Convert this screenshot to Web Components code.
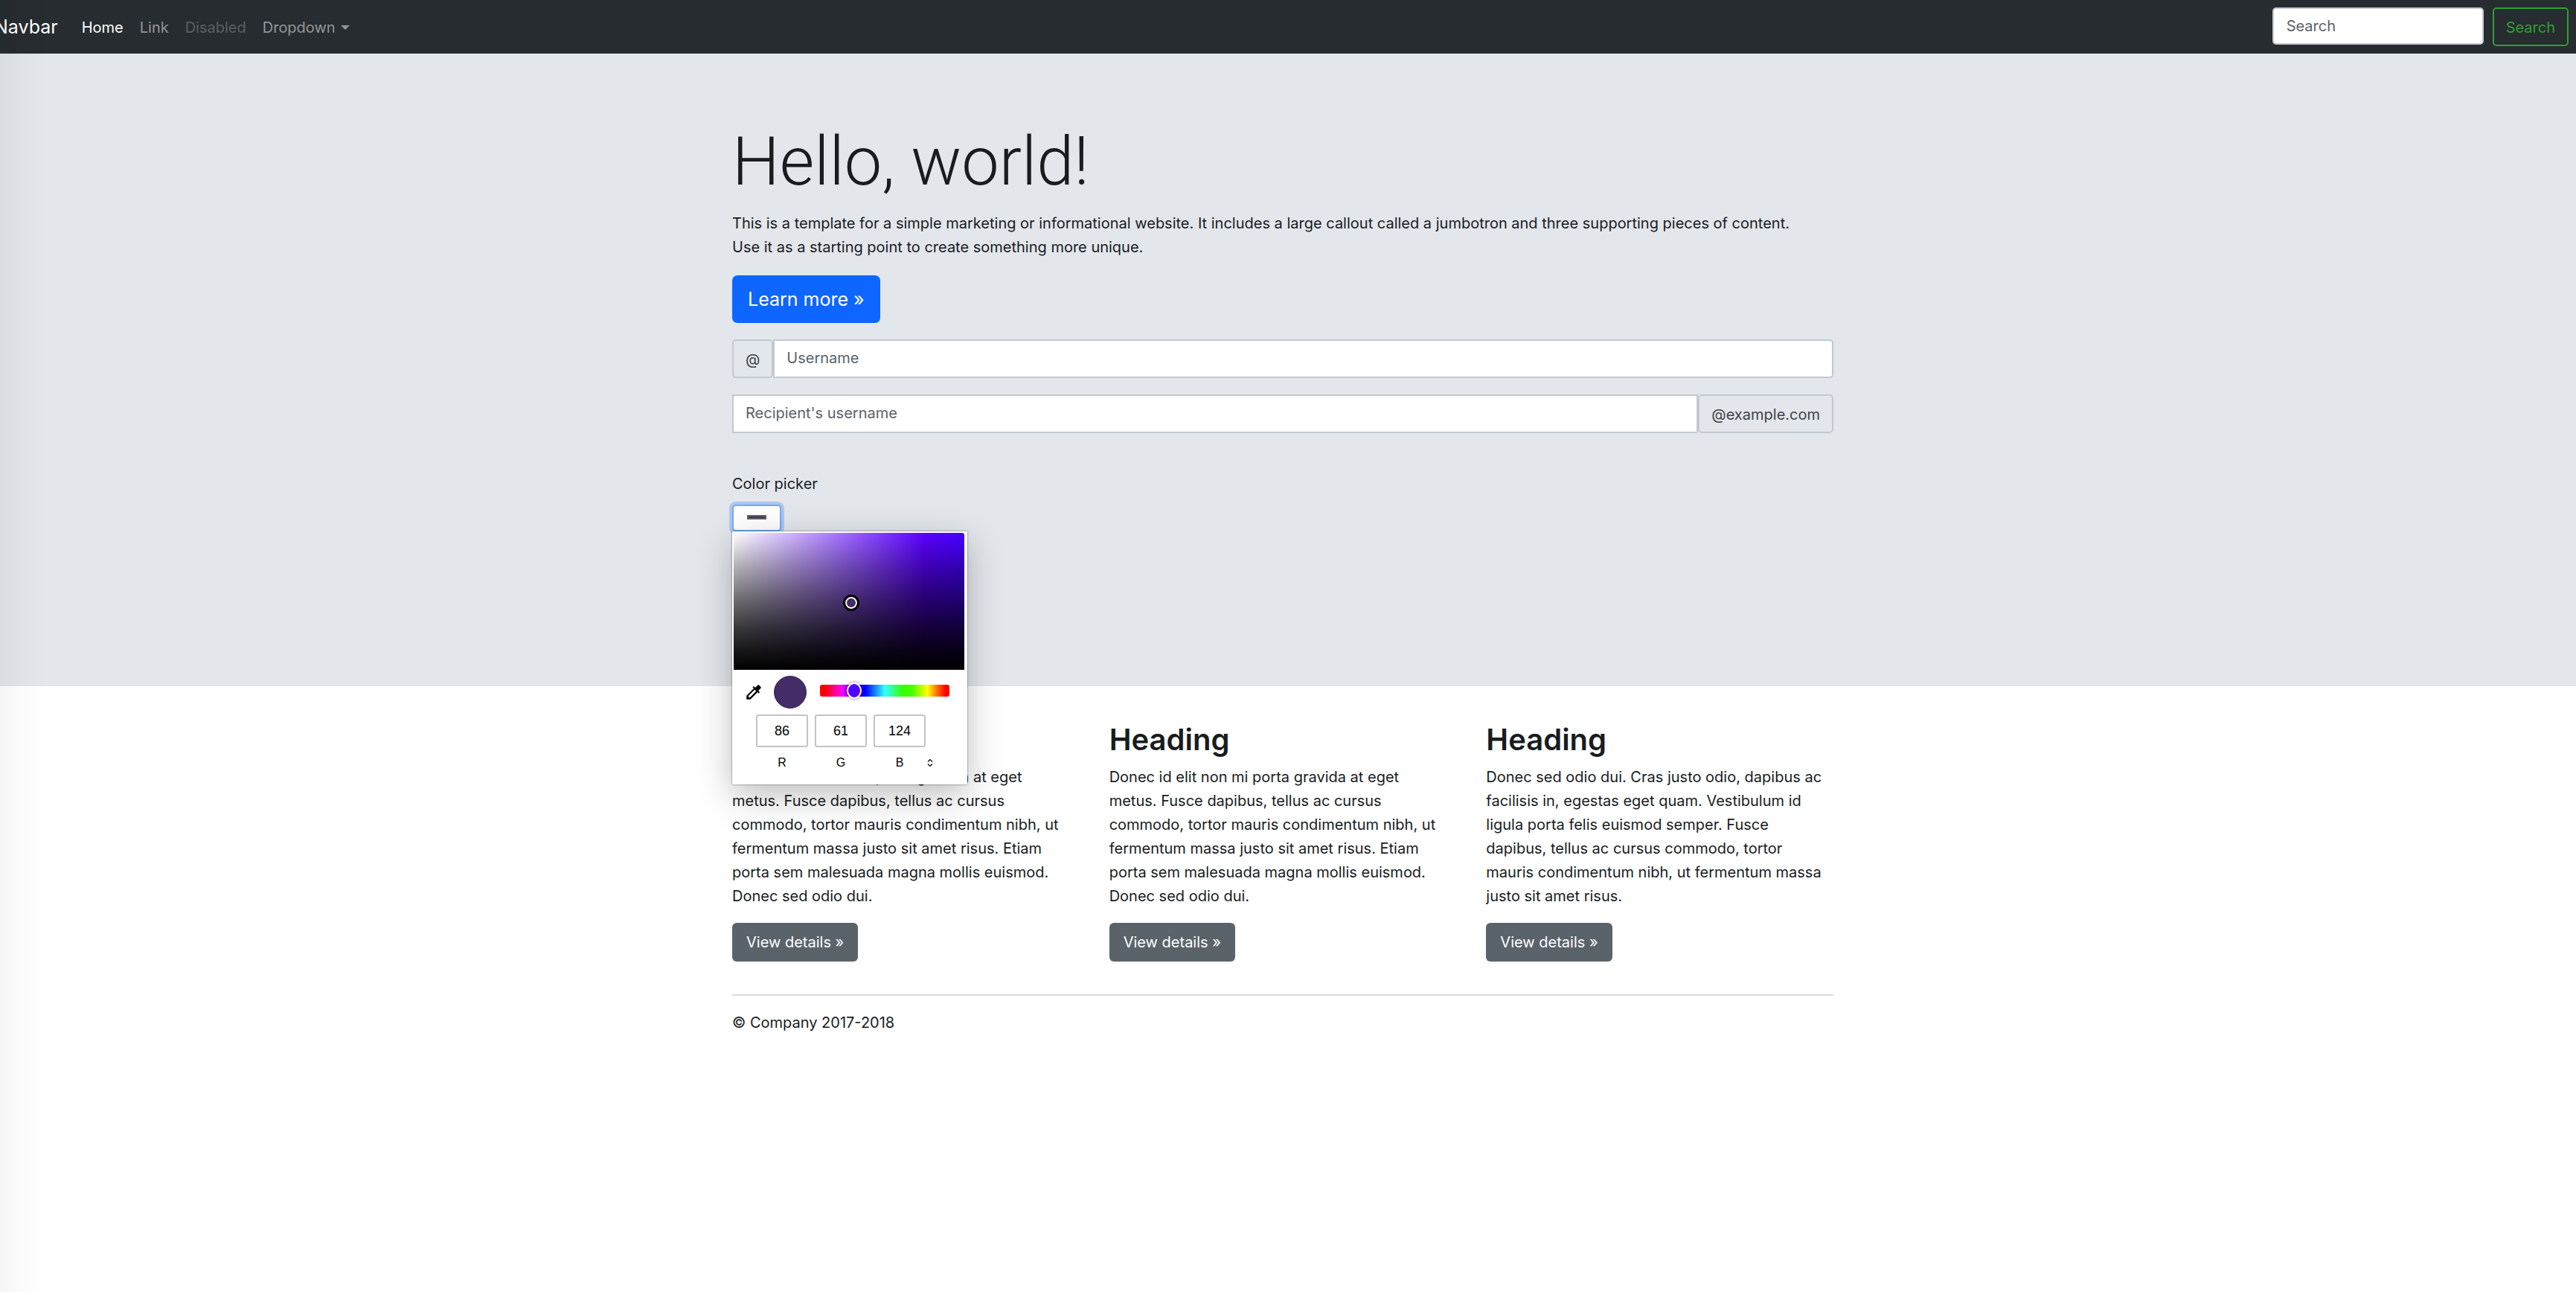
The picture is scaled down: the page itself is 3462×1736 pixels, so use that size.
<!DOCTYPE html>
<html lang="en">
<head>
<meta charset="utf-8">
<meta name="viewport" content="width=device-width, initial-scale=1">
<title>Jumbotron Template</title>
<style>
:root {
  --ink: #181c1f;
  --muted: #5a626a;
  --line: #c2c9d1;
  --panel: #e3e6eb;
  --dark: #272c30;
  --gutter: 40px;
}
body {
  margin: 0;
  background: #fff;
  color: var(--ink);
  font: 400 20px/32px Inter, "Liberation Sans", sans-serif;
}
/* soft shade along the window's left edge */
body::after {
  content: "";
  position: fixed;
  inset: 0 auto 0 0;
  width: 64px;
  pointer-events: none;
  background: linear-gradient(to right, rgba(0,0,0,.04), rgba(0,0,0,.01) 50%, rgba(0,0,0,0));
}
.columns { display: grid; grid-template-columns: repeat(3, 1fr); gap: var(--gutter); }
</style>
</head>
<body>
<site-navbar></site-navbar>
<main>
  <page-jumbotron>
    <span slot="title">Hello, world!</span>
    <span slot="lead">This is a template for a simple marketing or informational website. It includes a large callout called a jumbotron and three supporting pieces of content. Use it as a starting point to create something more unique.</span>
    <action-button slot="action" variant="primary">Learn more »</action-button>
    <input-group prepend="@" placeholder="Username"></input-group>
    <input-group append="@example.com" placeholder="Recipient's username"></input-group>
    <color-field>Color picker</color-field>
  </page-jumbotron>
  <page-container>
    <div class="columns">
      <info-column heading="Heading">Donec id elit non mi porta gravida at eget metus. Fusce dapibus, tellus ac cursus commodo, tortor mauris condimentum nibh, ut fermentum massa justo sit amet risus. Etiam porta sem malesuada magna mollis euismod. Donec sed odio dui.</info-column>
      <info-column heading="Heading">Donec id elit non mi porta gravida at eget metus. Fusce dapibus, tellus ac cursus commodo, tortor mauris condimentum nibh, ut fermentum massa justo sit amet risus. Etiam porta sem malesuada magna mollis euismod. Donec sed odio dui.</info-column>
      <info-column heading="Heading">Donec sed odio dui. Cras justo odio, dapibus ac facilisis in, egestas eget quam. Vestibulum id ligula porta felis euismod semper. Fusce dapibus, tellus ac cursus commodo, tortor mauris condimentum nibh, ut fermentum massa justo sit amet risus.</info-column>
    </div>
  </page-container>
</main>
<page-container><page-footer>© Company 2017-2018</page-footer></page-container>

<script>
const base = `
  *, *::before, *::after { box-sizing: border-box; }
  :host { display: block; }
  a { color: inherit; text-decoration: none; }
  input, button { font: inherit; margin: 0; }
  input::placeholder { color: var(--muted); opacity: 1; }
`;
function define(name, render) {
  customElements.define(name, class extends HTMLElement {
    constructor() {
      super();
      this.attachShadow({ mode: 'open' });
    }
    connectedCallback() {
      const { css, html } = render(this);
      this.shadowRoot.innerHTML = `<style>${base}${css}</style>${html}`;
    }
  });
}

define('site-navbar', () => ({
  css: `
    nav { display: flex; align-items: center; height: 72px; padding: 0 10px 0 0; background: var(--dark); color: rgba(255,255,255,.5); }
    .brand { margin-left: -8px; margin-right: 32px; font-size: 25px; color: #fff; }
    ul { display: flex; gap: 22px; margin: 0; padding: 2px 0 0; list-style: none; flex: 1; }
    .active { color: #fff; }
    .disabled { color: rgba(255,255,255,.25); }
    .toggle { display: flex; align-items: center; gap: 7px; border: 0; padding: 0; background: none; color: inherit; }
    .toggle::after { content: ""; border: 6px solid transparent; border-top-color: currentColor; border-bottom: 0; }
    form { display: flex; align-items: flex-start; gap: 12px; }
    input { width: 284px; height: 50px; padding: 0 17px; border: 2px solid var(--line); border-radius: 5px; background: #fff; }
    form button { height: 52px; padding: 2px 16px 0; border: 2px solid #2f9e33; border-radius: 5px; background: none; color: #2f9e33; }
  `,
  html: `
    <nav>
      <a class="brand" href="#">Navbar</a>
      <ul>
        <li><a class="active" href="#" aria-current="page">Home</a></li>
        <li><a href="#">Link</a></li>
        <li><a class="disabled" href="#" aria-disabled="true">Disabled</a></li>
        <li><button class="toggle" type="button" aria-haspopup="true">Dropdown</button></li>
      </ul>
      <form role="search">
        <input type="search" placeholder="Search" aria-label="Search">
        <button type="button">Search</button>
      </form>
    </nav>`
}));

define('page-container', () => ({
  css: `:host { box-sizing: border-box; width: min(1494px, 100% - 66px); margin: 0 auto; padding-right: 14px; }`,
  html: `<slot></slot>`
}));

define('page-jumbotron', () => ({
  css: `
    :host { background: var(--panel); padding: 88px 0 208px; margin-bottom: 42px; }
    h1 { margin: 0 0 9px; font-family: Roboto, Inter, sans-serif; font-size: 90px; font-weight: 300; line-height: 115px; }
    p { margin: 0 0 22px; padding-right: 28px; }
    .stack { display: grid; gap: 22px; margin-top: 22px; }
  `,
  html: `
    <page-container>
      <h1><slot name="title"></slot></h1>
      <p><slot name="lead"></slot></p>
      <slot name="action"></slot>
      <div class="stack"><slot></slot></div>
    </page-container>`
}));

define('action-button', () => ({
  css: `
    :host { display: flex; }
    a { padding: 10px 19px; border-radius: 6px; background: #5b636a; color: #fff; }
    :host([variant="primary"]) a { padding: 16px 21px; border-radius: 7px; background: #0d66ff; font-size: 25px; }
  `,
  html: `<a href="#" role="button"><slot></slot></a>`
}));

define('input-group', el => {
  const pre = el.getAttribute('prepend'), post = el.getAttribute('append');
  const hint = el.getAttribute('placeholder');
  return {
    css: `
      :host { display: flex; height: 52px; }
      input { flex: 1; min-width: 0; padding: 0 16px 2px; border: 2px solid var(--line); background: #fff; }
      input:first-child { border-radius: 5px 0 0 5px; }
      input:last-child { border-radius: 0 5px 5px 0; }
      span { display: flex; align-items: center; padding: 2px 16px 0; border: 2px solid var(--line); border-radius: 5px; color: #3d4349; }
    `,
    html: `${pre ? `<span>${pre}</span>` : ''}<input type="text" placeholder="${hint}" aria-label="${hint}">${post ? `<span>${post}</span>` : ''}`
  };
});

define('color-field', () => ({
  css: `
    :host { margin-top: 30px; }
    label { display: block; margin-bottom: 12px; }
    .anchor { position: relative; width: max-content; height: 36px; }
    input { display: block; width: 66px; height: 36px; padding: 12px 18px 14px; border: 2px solid #6fa9fb; border-radius: 5px; background: #fff; box-shadow: 0 0 0 4px rgba(33,111,255,.27); outline: 0; appearance: none; }
    input::-webkit-color-swatch-wrapper { padding: 0; }
    input::-webkit-color-swatch { border: 2px solid #666; border-radius: 0; }
    color-popup { position: absolute; top: 100%; left: 0; z-index: 2; }
  `,
  html: `
    <label for="color"><slot></slot></label>
    <div class="anchor">
      <input id="color" type="color" value="#432c67">
      <color-popup></color-popup>
    </div>`
}));

define('color-popup', () => ({
  css: `
    :host { width: 316px; height: 340px; padding: 2px; background: #fff; color: #000; font: 16px/20px "Liberation Sans", Arial, sans-serif;
      box-shadow: 0 0 2px rgba(0,0,0,.6), 0 14px 44px rgba(0,0,0,.26); }
    .well { position: relative; width: 310px; height: 184px; border-radius: 0 3px 0 0;
      background: linear-gradient(to bottom, transparent, rgba(0,0,0,.3) 25%, rgba(0,0,0,.58) 50%, rgba(0,0,0,.78) 70%, rgba(0,0,0,.91) 86%, #000), linear-gradient(to right, #fff, #5a00ff 83%, #4600ff); }
    .well i { position: absolute; left: 147px; top: 83px; width: 22px; height: 22px; border: 3px solid #000; border-radius: 50%; background: #432c67; box-shadow: inset 0 0 0 2px #fff; }
    .row { display: flex; align-items: center; padding: 8px 0 0 14px; }
    .pick { display: flex; width: 26px; height: 26px; padding: 0; border: 0; background: none; }
    .now { width: 44px; height: 44px; margin: 0 18px 0 14px; border-radius: 50%; background: #432c67; border: 1px solid #3a2659; }
    .hue { appearance: none; width: 174px; height: 16px; margin-bottom: 4px; border-radius: 3px;
      background: linear-gradient(to right, #f00 4%, #f0f 17%, #50f 25%, #00f 35%, #3ff 50%, #3f0 64%, #4f0 71%, #ff0 83%, #f80 89%, #f00 97%); }
    .hue::-webkit-slider-thumb { appearance: none; width: 20px; height: 22px; border: 2px solid #fff; border-radius: 50%; background: #5000ff; box-shadow: 0 0 4px rgba(0,0,0,.5); }
    .rgb { display: flex; gap: 9px; padding: 8px 0 0 30px; }
    label { display: grid; gap: 11px; justify-items: center; }
    label input { width: 70px; height: 44px; padding: 0; border: 2px solid #c4c4c4; border-radius: 3px; background: #fff; color: #000; font-size: 18px; text-align: center; }
    .mode { align-self: flex-end; display: flex; width: 12px; height: 20px; margin-left: -9px; padding: 4px 0 0; border: 0; background: none; }
  `,
  html: `
    <div class="well"><i></i></div>
    <div class="row">
      <button class="pick" type="button" aria-label="Pick a color from the screen">
        <svg viewBox="0 0 24 24" width="26" height="26"><path d="M20.7 5.6l-2.3-2.3a1 1 0 0 0-1.4 0l-3.1 3.1L12 4.5l-1.4 1.4 1.4 1.4L3 16.3V21h4.8l8.9-8.9 1.4 1.4 1.4-1.4-1.9-1.9 3.1-3.1c.4-.4.4-1.1 0-1.5zM6.9 19L5 17.1l8.1-8.1 1.9 1.9L6.9 19z"/></svg>
      </button>
      <div class="now"></div>
      <input class="hue" type="range" min="0" max="360" value="84" aria-label="Hue">
    </div>
    <div class="rgb">
      <label><input type="text" value="86">R</label>
      <label><input type="text" value="61">G</label>
      <label><input type="text" value="124">B</label>
      <button class="mode" type="button" aria-label="Change color format">
        <svg viewBox="0 0 12 12" width="12" height="12" fill="none" stroke="#000" stroke-width="1.2"><path d="M3 4.5L6 1.5l3 3M3 7.5l3 3 3-3"/></svg>
      </button>
    </div>`
}));

define('info-column', el => ({
  css: `
    h2 { margin: 0 0 8px; padding-top: 4px; font-size: 40px; font-weight: 600; line-height: 52px; }
    p { margin: 0 0 20px; padding-right: 12px; }
  `,
  html: `
    <h2>${el.getAttribute('heading')}</h2>
    <p><slot></slot></p>
    <action-button>View details »</action-button>`
}));

define('page-footer', () => ({
  css: `
    :host { margin-top: 44px; padding: 20px 0; border-top: 2px solid #dcdcdc; }
    p { margin: 0; }
  `,
  html: `<footer><p><slot></slot></p></footer>`
}));
</script>
</body>
</html>
